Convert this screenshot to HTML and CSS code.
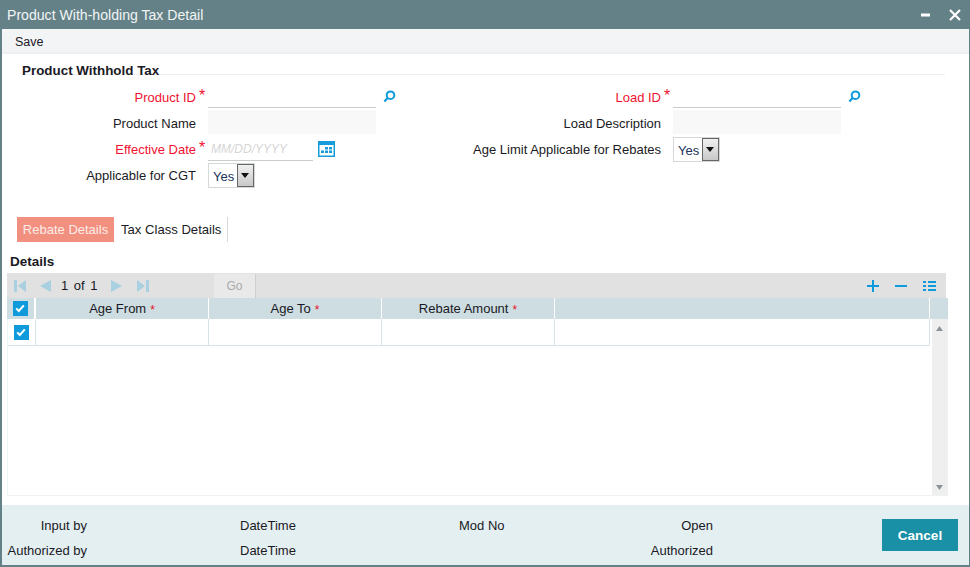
FILE: index.html
```html
<!DOCTYPE html>
<html lang="en">
<head>
<meta charset="utf-8">
<title>Product With-holding Tax Detail</title>
<link rel="stylesheet" href="styles.css">
</head>
<body>
<div class="window">
  <header class="titlebar">
    <span class="title">Product With-holding Tax Detail</span>
    <span class="winbtns">
      <svg width="10" height="4" viewBox="0 0 10 4"><rect y="0.5" width="9" height="3" fill="#fff"/></svg>
      <svg width="12" height="12" viewBox="0 0 12 12"><path d="M1 1l10 10M11 1L1 11" stroke="#fff" stroke-width="2.2" fill="none"/></svg>
    </span>
  </header>
  <nav class="toolbar"><span>Save</span></nav>
  <main class="content">
    <h2 class="section">Product Withhold Tax</h2>
    <div class="form">
      <div class="col col-left">
        <div class="row">
          <label class="label req">Product ID</label><span class="star">*</span>
          <span class="input"></span>
          <svg class="lens" width="13" height="13" viewBox="0 0 13 13"><circle cx="7.5" cy="5.2" r="3.8" stroke="#0e9bdc" stroke-width="2" fill="none"/><path d="M4.6 8L1.4 11.5" stroke="#0e9bdc" stroke-width="2.2"/></svg>
        </div>
        <div class="row">
          <label class="label">Product Name</label><span class="star"></span>
          <span class="input ro"></span>
        </div>
        <div class="row">
          <label class="label req">Effective Date</label><span class="star">*</span>
          <span class="input date">MM/DD/YYYY</span>
          <svg class="cal" width="17" height="16" viewBox="0 0 17 16"><rect width="17" height="16" fill="#159ddb"/><rect x="1.5" y="4" width="14" height="10.5" fill="#fff"/><path d="M3 9.5h3v2.5H3zM7 6h3v2.5H7zM11 6h3v2.5h-3zM7 9.5h3v2.5H7zM11 9.5h3v2.5h-3z" fill="#159ddb"/></svg>
        </div>
        <div class="row row-sel">
          <label class="label">Applicable for CGT</label><span class="star"></span>
          <span class="select"><span class="val">Yes</span><span class="arrow"></span></span>
        </div>
      </div>
      <div class="col col-right">
        <div class="row">
          <label class="label req">Load ID</label><span class="star">*</span>
          <span class="input"></span>
          <svg class="lens" width="13" height="13" viewBox="0 0 13 13"><circle cx="7.5" cy="5.2" r="3.8" stroke="#0e9bdc" stroke-width="2" fill="none"/><path d="M4.6 8L1.4 11.5" stroke="#0e9bdc" stroke-width="2.2"/></svg>
        </div>
        <div class="row">
          <label class="label">Load Description</label><span class="star"></span>
          <span class="input ro"></span>
        </div>
        <div class="row">
          <label class="label">Age Limit Applicable for Rebates</label><span class="star"></span>
          <span class="select"><span class="val">Yes</span><span class="arrow"></span></span>
        </div>
      </div>
    </div>
    <div class="tabs">
      <span class="tab active">Rebate Details</span>
      <span class="tab">Tax Class Details</span>
    </div>
    <h3 class="details-title">Details</h3>
    <section class="grid">
      <div class="pager">
        <span class="pg-nav">
          <svg width="12" height="12" viewBox="0 0 12 12"><path d="M0 0h3v12H0zM12 0v12L4 6z" fill="#a9d0e0"/></svg>
          <svg class="ml" width="12" height="12" viewBox="0 0 12 12"><path d="M12 0v12L1 6z" fill="#a9d0e0"/></svg>
          <span class="pg-text">1 of 1</span>
          <svg width="12" height="12" viewBox="0 0 12 12"><path d="M0 0v12l11-6z" fill="#a9d0e0"/></svg>
          <svg class="ml2" width="12" height="12" viewBox="0 0 12 12"><path d="M0 0v12l8-6zM9 0h3v12H9z" fill="#a9d0e0"/></svg>
        </span>
        <span class="go">Go</span>
        <span class="pg-actions">
          <svg width="12" height="12" viewBox="0 0 12 12"><path d="M6 0v12M0 6h12" stroke="#0e9bdc" stroke-width="2"/></svg>
          <svg width="12" height="12" viewBox="0 0 12 12"><path d="M0 6h12" stroke="#0e9bdc" stroke-width="2"/></svg>
          <svg width="13" height="12" viewBox="0 0 13 12"><path d="M0 1h3v2H0zM5 1h8v2H5zM0 5h3v2H0zM5 5h8v2H5zM0 9h3v2H0zM5 9h8v2H5z" fill="#0e9bdc"/></svg>
        </span>
      </div>
      <div class="thead">
        <span class="cell chk"><span class="check"><svg width="14" height="14" viewBox="0 0 14 14"><path d="M3.2 7.4l2.6 2.6 5-5.6" stroke="#fff" stroke-width="2" fill="none"/></svg></span></span>
        <span class="cell col-c">Age From <i>*</i></span>
        <span class="cell col-c">Age To <i>*</i></span>
        <span class="cell col-c">Rebate Amount <i>*</i></span>
        <span class="cell col-fill"></span>
      </div>
      <div class="tbody">
        <div class="rows">
          <div class="trow">
            <span class="cell chk"><span class="check"><svg width="14" height="14" viewBox="0 0 14 14"><path d="M3.2 7.4l2.6 2.6 5-5.6" stroke="#fff" stroke-width="2" fill="none"/></svg></span></span>
            <span class="cell col-c"></span>
            <span class="cell col-c"></span>
            <span class="cell col-c"></span>
            <span class="cell col-fill"></span>
          </div>
        </div>
        <div class="scrollbar">
          <svg width="7" height="5" viewBox="0 0 7 5"><path d="M0 5l3.5-5L7 5z" fill="#8a9499"/></svg>
          <svg width="7" height="5" viewBox="0 0 7 5"><path d="M0 0l3.5 5L7 0z" fill="#8a9499"/></svg>
        </div>
      </div>
    </section>
  </main>
  <footer class="footer">
    <div class="audit">
      <span class="a1">Input by</span><span class="a2">DateTime</span><span class="a3">Mod No</span><span class="a4">Open</span>
      <span class="a1">Authorized by</span><span class="a2">DateTime</span><span class="a3"></span><span class="a4">Authorized</span>
    </div>
    <button class="cancel" type="button">Cancel</button>
  </footer>
</div>
</body>
</html>
```

FILE: styles.css
```css
* { box-sizing: border-box; }
html, body { margin: 0; padding: 0; background: #fff; }
body { font-family: "Liberation Sans", Arial, sans-serif; font-size: 13px; color: #1a1a24; }

.window {
  width: 970px; height: 567px; display: flex; flex-direction: column;
  border: 2px solid #648187; border-width: 0 1px 2px 2px; overflow: hidden;
}

.titlebar {
  height: 29px; margin: 0 -1px 0 -2px; flex: none; background: #648187; color: #f2f5f5;
  display: flex; align-items: center; justify-content: space-between; padding: 0 9px 0 7px;
}
.title { font-size: 14.1px; }
.winbtns { display: flex; align-items: center; gap: 18px; }

.toolbar {
  height: 25px; flex: none; background: #f3f4f6; border-bottom: 2px solid #eceeef;
  padding: 2px 0 0 13px; display: flex; align-items: center; font-size: 12.5px;
}

.content { flex: 1; display: flex; flex-direction: column; min-height: 0; }

.section {
  margin: 9px 24px 0 20px; height: 12px; font-size: 13.4px; line-height: 15px; font-weight: bold;
  border-bottom: 1px solid #eef0f0;
}

.form { display: flex; margin-top: 9px; height: 125px; }
.col { display: flex; flex-direction: column; }
.col-left { width: 465px; }
.col-right { flex: 1; }

.row { display: flex; align-items: flex-start; height: 26px; flex: none; }
.row-sel { height: 28px; }
.label { text-align: right; line-height: 28px; white-space: nowrap; }
.col-left .label { width: 194px; }
.col-right .label { width: 194px; }
.req { color: #f0112f; }
.star {
  width: 12px; flex: none; color: #f0112f; font-size: 16px; line-height: 24px; padding-left: 3px; height: 26px;
}
.input {
  width: 168px; height: 24px; display: block; border-bottom: 1px solid #c9cccc; flex: none;
}
.input.ro { background: #f8f8f8; border-bottom: 0; }
.input.date {
  width: 105px; color: #d6d6d6; font-style: italic; font-size: 12px; line-height: 27px; padding-left: 3px;
  height: 25px;
}
.lens { margin: 6px 0 0 7px; }
.cal { margin: 5px 0 0 5px; }

.select {
  display: flex; width: 47px; height: 25px; border: 1px solid #d4d8d8; margin-top: 1px; flex: none;
}
.select .val { flex: 1; padding-left: 4px; line-height: 25px; color: #22335a; }
.select .arrow {
  width: 17px; margin: 0; border: 1px solid #666;
  background: linear-gradient(#f0f0f0, #c8c8c8); position: relative;
}
.select .arrow::after {
  content: ""; position: absolute; left: 3px; top: 8px;
  border: 4px solid transparent; border-top: 5px solid #111; border-bottom: 0;
}

.tabs { display: flex; margin: 8px 0 0 15px; height: 25px; flex: none; }
.tab {
  line-height: 25px; padding: 0 6px 0 7px; height: 25px; border-right: 1px solid #d9d9d9; font-size: 13.1px;
}
.tab.active { background: #f2907f; color: #fcecea; border-right: 0; width: 97px; text-align: center; padding: 0; font-size: 13px; }

.details-title { margin: 13px 0 0 8px; font-size: 13.5px; line-height: 14px; font-weight: bold; flex: none; }

.grid { margin: 4px 0 0 5px; width: 941px; height: 223px; flex: none; display: flex; flex-direction: column; }
.pager {
  height: 25px; flex: none; background: #e1e1e1; display: flex; align-items: center; margin-right: 2px;
}
.pg-nav { display: flex; align-items: center; width: 207px; padding-left: 7px; flex: none; }
.pg-nav .ml { margin-left: 13px; }
.pg-nav .ml2 { margin-left: 14px; }
.pg-text { margin: 0 14px 0 10px; word-spacing: 2px; width: 36px; white-space: nowrap; color: #1a1a24; }
.go {
  width: 42px; height: 25px; background: #e9e9e9; border-right: 1px solid #cfcfcf; border-bottom: 1px solid #cfcfcf;
  color: #a9a9a9; text-align: center; line-height: 25px; margin-top: 1px; font-size: 12px;
}
.pg-actions { margin-left: auto; display: flex; align-items: center; gap: 16px; padding-right: 10px; }

.thead, .trow { display: flex; flex: none; }
.thead { height: 21px; background: #cddde2; padding-left: 1px; }
.cell { display: flex; align-items: center; justify-content: center; flex: none; }
.chk { width: 28px; border-right: 2px solid #fff; }
.thead .chk { margin-left: -1px; width: 29px; }
.thead .col-c { width: 173px; border-right: 1px solid #fff; }
.col-fill { width: 375px; }
.thead .col-fill { border-right: 1px solid #fff; }
.thead i { color: #e8121f; font-style: normal; margin-left: 4px; font-size: 12px; padding-top: 2px; }
.check { width: 15px; height: 15px; background: #0f9bdb; display: block; }
.check svg { display: block; }

.tbody {
  flex: 1; display: flex; border: 1px solid #eef2f4; border-top: 0; min-height: 0;
}
.rows { flex: none; width: 922px; }
.trow { height: 27px; border-bottom: 1px solid #d8e3e8; border-right: 1px solid #d8e3e8; }
.trow .chk { border-right: 1px solid #d8e3e8; }
.trow .col-c { width: 173px; border-right: 1px solid #d8e3e8; }
.scrollbar {
  width: 15px; margin-left: 2px; background: #efefef; display: flex; flex-direction: column;
  justify-content: space-between; align-items: center; padding: 7px 0 5px;
}

.footer {
  margin-top: auto; height: 60px; flex: none; background: #e4eff2;
  display: flex; align-items: center; justify-content: space-between; padding: 0 11px 0 0;
}
.audit {
  display: grid; grid-template-columns: 85px 208px 209px 209px; grid-auto-rows: 25px; align-items: center;
  margin-top: 5px;
}
.a1, .a4 { text-align: right; }
.a2 { padding-left: 153px; white-space: nowrap; }
.a3 { padding-left: 164px; white-space: nowrap; }
.cancel {
  width: 76px; height: 32px; background: #1a90a6; color: #fff; border: 0; font: bold 13.5px "Liberation Sans", Arial, sans-serif;
}
```
